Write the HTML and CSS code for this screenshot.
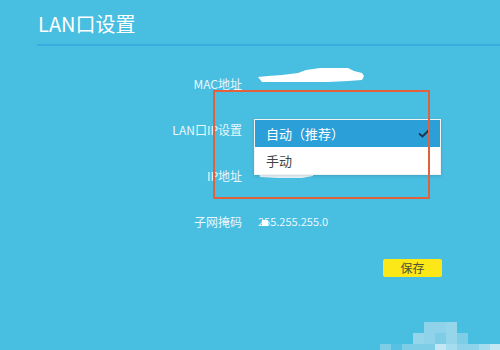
FILE: index.html
```html
<!DOCTYPE html>
<html lang="zh-CN">
<head>
  <meta charset="UTF-8" />
  <title>LAN口设置</title>
  <link rel="stylesheet" href="styles.css">
</head>
<body>
  <div class="header">
    <h1>LAN口设置</h1>
  </div>

  <div class="form">
    <div class="row">
      <label>MAC地址</label>
      <div class="value">
        <svg class="scribble mac" width="106" height="16" viewBox="0 0 106 16">
          <path d="M0 9 L10 8 L24 7 L40 5 L48 2 L62 0 L90 0 L96 3 L104 5 L106 8 L104 12 L90 13 L70 14 L40 14 L20 14 L4 14 Z" fill="#fff"/>
        </svg>
      </div>
    </div>
    <div class="row">
      <label>LAN口IP设置</label>
      <div class="value">
        <div class="dropdown">
          <div class="option selected">
            <span>自动（推荐）</span>
            <svg width="12" height="9" viewBox="0 0 12 9">
              <path d="M1 4.5 L4.5 7.5 L11 1" fill="none" stroke="#1f3546" stroke-width="1.8"/>
            </svg>
          </div>
          <div class="option">手动</div>
        </div>
      </div>
    </div>
    <div class="row">
      <label>IP地址</label>
      <div class="value">
        <svg class="scribble ip" width="56" height="12" viewBox="0 0 56 12">
          <path d="M0 2 L56 2 L55 9 L44 11 L20 11 L2 10 Z" fill="#e9f6fb"/>
        </svg>
      </div>
    </div>
    <div class="row">
      <label>子网掩码</label>
      <div class="value mask">255.255.255.0<span class="cursor"></span></div>
    </div>
    <div class="actions">
      <button class="save">保存</button>
    </div>
  </div>

  <div class="highlight-box"></div>

  <div class="mosaic">
    <div class="cell c0"></div><div class="cell c0"></div><div class="cell c0"></div><div class="cell c0"></div><div class="cell a"></div><div class="cell a"></div><div class="cell b"></div><div class="cell c0"></div><div class="cell c0"></div><div class="cell c0"></div><div class="cell c0"></div>
    <div class="cell c0"></div><div class="cell c0"></div><div class="cell c0"></div><div class="cell b"></div><div class="cell a"></div><div class="cell c"></div><div class="cell b"></div><div class="cell c"></div><div class="cell c0"></div><div class="cell c0"></div><div class="cell c0"></div>
    <div class="cell c"></div><div class="cell d"></div><div class="cell c"></div><div class="cell c"></div><div class="cell c"></div><div class="cell e"></div><div class="cell f"></div><div class="cell a"></div><div class="cell a"></div><div class="cell f"></div><div class="cell e"></div>
  </div>
</body>
</html>
```

FILE: styles.css
```css
body {
  margin: 0;
  width: 500px;
  height: 350px;
  overflow: hidden;
  position: relative;
  background-color: #48bee1;
  font-family: "Noto Sans CJK SC", "Noto Sans", sans-serif;
  color: #eaf7fc;
}
.header {
  margin-left: 37px;
  height: 44px;
  border-bottom: 2px solid #39ade0;
}
.header h1 {
  margin: 0;
  padding: 11px 0 0 1px;
  font-size: 20px;
  font-weight: normal;
  line-height: 26px;
  color: #fff;
}
.form {
  padding-top: 14px;
}
.row {
  display: grid;
  grid-template-columns: 242px 1fr;
  column-gap: 16px;
  align-items: center;
  height: 46px;
  font-size: 12px;
}
.row label {
  text-align: right;
}
.value {
  position: relative;
  height: 16px;
  line-height: 16px;
}
.value.mask {
  font-size: 11px;
}
.scribble {
  position: absolute;
  left: 0;
}
.scribble.mac {
  top: -7px;
}
.scribble.ip {
  top: 0;
}
.cursor {
  position: absolute;
  left: 4px;
  top: 7px;
  width: 6px;
  height: 6px;
  background: #fff;
}
.dropdown {
  position: absolute;
  left: -4px;
  top: -2px;
  width: 185px;
  background: #fff;
  border: 1px solid #f2f2f2;
  box-shadow: 0 1px 3px rgba(0, 0, 0, 0.15);
  z-index: 2;
}
.option {
  height: 27px;
  padding: 0 10px 0 11px;
  display: flex;
  align-items: center;
  justify-content: space-between;
  font-size: 13px;
  color: #444;
}
.option.selected {
  background: #2a9fd8;
  color: #fff;
}
.actions {
  display: flex;
  justify-content: flex-end;
  width: 442px;
  margin-top: 15px;
}
.save {
  width: 59px;
  height: 18px;
  padding: 0;
  border: none;
  border-radius: 2px;
  background: #fbe816;
  color: #4f4f3a;
  font-family: "Noto Sans CJK SC", sans-serif;
  font-size: 12px;
  line-height: 18px;
}
.highlight-box {
  position: absolute;
  left: 213px;
  top: 90px;
  width: 213px;
  height: 105px;
  border: 2px solid #e2603c;
  z-index: 3;
}
.mosaic {
  position: absolute;
  left: 380px;
  top: 322px;
  display: grid;
  grid-template-columns: repeat(11, 11px);
  grid-auto-rows: 11px;
}
.c0 { background: transparent; }
.a { background: #8fd3ea; }
.b { background: #96d6eb; }
.c { background: #7ecde7; }
.d { background: #57c1e3; }
.e { background: #c3e8f4; }
.f { background: #a5dcee; }
```
